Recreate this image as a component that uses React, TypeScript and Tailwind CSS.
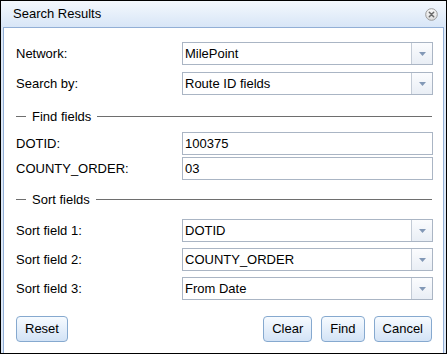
const font = "font-['Liberation_Sans',Arial,sans-serif]";

function Trigger() {
  return (
    <div className="flex w-[21px] shrink-0 items-center justify-center border-l border-[#c3cbd6] bg-gradient-to-b from-[#fbfcfe] to-[#e9eef5]">
      <svg width="7" height="4" viewBox="0 0 7 4">
        <path d="M0 0h7L3.5 4z" fill="#8298b6" />
      </svg>
    </div>
  );
}

function SelectRow({ label, value, className = "" }: { label: string; value: string; className?: string }) {
  return (
    <div className={`flex h-[23px] items-center ${className}`}>
      <div className="w-[166px] shrink-0 text-black">{label}</div>
      <div className="flex h-full flex-1 border border-[#aab5c4] bg-white">
        <div className="flex flex-1 items-center pl-[2px] text-black">{value}</div>
        <Trigger />
      </div>
    </div>
  );
}

function TextRow({ label, value, className = "" }: { label: string; value: string; className?: string }) {
  return (
    <div className={`flex h-[23px] items-center ${className}`}>
      <div className="w-[166px] shrink-0 text-black">{label}</div>
      <div className="flex h-full flex-1 items-center border border-[#aab5c4] bg-white pl-[2px] text-black">
        {value}
      </div>
    </div>
  );
}

function Legend({ title, className = "" }: { title: string; className?: string }) {
  return (
    <div className={`flex h-[17px] items-center ${className}`}>
      <div className="h-px w-[10px] bg-[#6e6e6e]" />
      <span className="px-[6px] leading-none text-black">{title}</span>
      <div className="mr-[1px] h-px flex-1 bg-[#6e6e6e]" />
    </div>
  );
}

function Btn({ children }: { children: string }) {
  return (
    <button className="h-[26px] rounded-[4px] border border-[#86a9cf] bg-gradient-to-b from-[#f7fbff] to-[#d3e3f6] px-[8px] text-black">
      {children}
    </button>
  );
}

export default function App() {
  return (
    <div className={`${font} flex h-[354px] w-[447px] flex-col border border-black bg-[#dde8f6] text-[13px]`}>
      <div className="flex h-[26px] shrink-0 items-center justify-between bg-gradient-to-b from-[#f4f8fd] to-[#d8e6f7] pl-[12px] pr-[8px] text-black">
        <span>Search Results</span>
        <svg width="13" height="13" viewBox="0 0 13 13">
          <defs>
            <linearGradient id="cg" x1="0" y1="0" x2="0" y2="1">
              <stop offset="0" stopColor="#fbfbfb" />
              <stop offset="1" stopColor="#dcdcdc" />
            </linearGradient>
          </defs>
          <circle cx="6.5" cy="6.5" r="5.8" fill="url(#cg)" stroke="#9a9a9a" strokeWidth="1" />
          <path d="M4.3 4.3l4.4 4.4M8.7 4.3l-4.4 4.4" stroke="#6a6a6a" strokeWidth="1.5" strokeLinecap="round" />
        </svg>
      </div>
      <div className="mx-[2px] flex flex-1 flex-col border border-b-0 border-[#92afd6] bg-white pl-[12px] pr-[10px] pt-[14px]">
        <SelectRow label="Network:" value="MilePoint" />
        <SelectRow label="Search by:" value="Route ID fields" className="mt-[7px]" />
        <Legend title="Find fields" className="mt-[13px]" />
        <TextRow label="DOTID:" value="100375" className="mt-[7px]" />
        <TextRow label="COUNTY_ORDER:" value="03" className="mt-[2px]" />
        <Legend title="Sort fields" className="mt-[11px]" />
        <SelectRow label="Sort field 1:" value="DOTID" className="mt-[11px]" />
        <SelectRow label="Sort field 2:" value="COUNTY_ORDER" className="mt-[6px]" />
        <SelectRow label="Sort field 3:" value="From Date" className="mt-[6px]" />
        <div className="mt-[16px] flex items-center pr-[1px]">
          <Btn>Reset</Btn>
          <div className="flex-1" />
          <div className="flex gap-[9px]">
            <Btn>Clear</Btn>
            <Btn>Find</Btn>
            <Btn>Cancel</Btn>
          </div>
        </div>
      </div>
    </div>
  );
}
